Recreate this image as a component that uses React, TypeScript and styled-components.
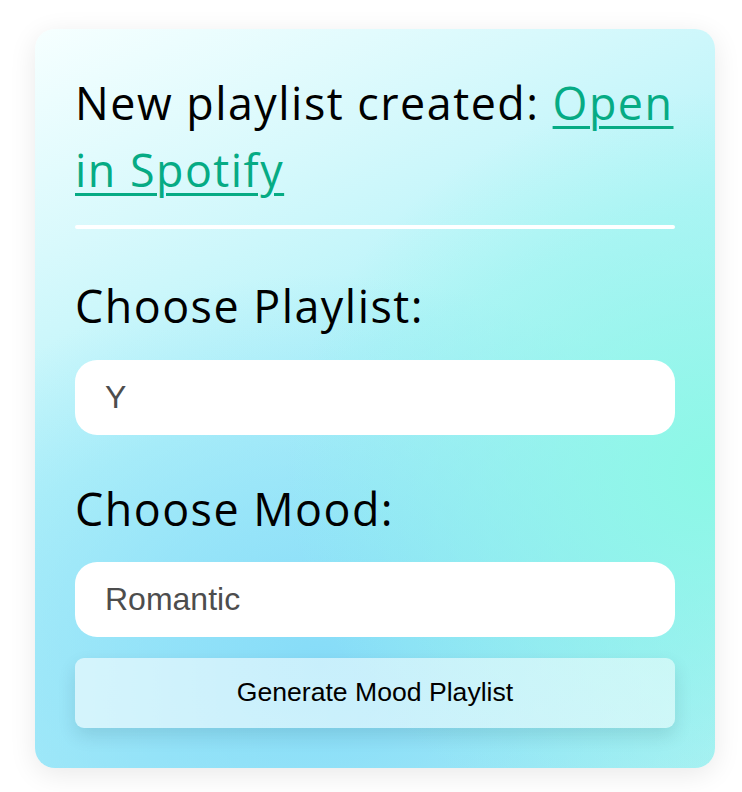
import React from "react";
import styled, { createGlobalStyle } from "styled-components";

const GlobalStyle = createGlobalStyle`
  body {
    margin: 0;
    background: #ffffff;
    font-family: "Liberation Sans", Arial, sans-serif;
  }
`;

const App = () => {
  return (
    <Page>
      <GlobalStyle />
      <Card>
        <Heading>
          New playlist created: <SpotifyLink href="#">Open in Spotify</SpotifyLink>
        </Heading>
        <Divider />
        <Label>Choose Playlist:</Label>
        <Field defaultValue="Y" />
        <Label $top={40}>Choose Mood:</Label>
        <Field defaultValue="Romantic" />
        <GenerateButton>Generate Mood Playlist</GenerateButton>
      </Card>
    </Page>
  );
};

export default App;

const Page = styled.div`
  padding: 29px 0 40px 35px;
`;

const Card = styled.div`
  width: 680px;
  box-sizing: border-box;
  padding: 40px;
  display: flex;
  flex-direction: column;
  border-radius: 20px;
  box-shadow: 0 6px 28px rgba(0, 0, 0, 0.09);
  background:
    radial-gradient(430px 380px at 100% 60%, rgba(140, 248, 230, 1) 0%, rgba(140, 248, 230, 0) 100%),
    radial-gradient(480px 390px at 42% 86%, rgba(134, 220, 248, 1) 0%, rgba(134, 220, 248, 0) 100%),
    linear-gradient(156deg, #f6ffff 0%, #d8f9fc 22%, #b6f3f9 45%, #a8ecf8 75%, #b4f2f4 100%);
`;

const Heading = styled.div`
  font-family: "Open Sans", sans-serif;
  font-size: 44.8px;
  line-height: 1.5;
  letter-spacing: 1.5px;
  color: #000;
`;

const SpotifyLink = styled.a`
  color: #06ab84;
  text-decoration: underline;
  text-decoration-thickness: 3px;
  text-underline-offset: 6px;
`;

const Divider = styled.div`
  height: 4px;
  border-radius: 2px;
  background: #ffffff;
  margin: 22px 0 43px;
`;

const Label = styled.div<{ $top?: number }>`
  font-family: "Open Sans", sans-serif;
  font-size: 44.8px;
  line-height: 1.5;
  letter-spacing: 1.5px;
  color: #000;
  margin-top: ${(p) => p.$top ?? 0}px;
  margin-bottom: 20px;
`;

const Field = styled.input`
  height: 75px;
  box-sizing: border-box;
  width: 100%;
  border: none;
  outline: none;
  border-radius: 22px;
  background: #ffffff;
  padding: 0 30px;
  font-family: "Liberation Sans", Arial, sans-serif;
  font-size: 32px;
  color: #4d4d4d;
`;

const GenerateButton = styled.button`
  margin-top: 21px;
  height: 70px;
  width: 100%;
  border: none;
  border-radius: 9px;
  background: linear-gradient(90deg, rgba(255, 255, 255, 0.58), rgba(255, 255, 255, 0.5));
  box-shadow: 0 8px 18px rgba(0, 40, 60, 0.12);
  font-family: "Liberation Sans", Arial, sans-serif;
  font-size: 26.6px;
  color: #000;
  cursor: pointer;
`;
